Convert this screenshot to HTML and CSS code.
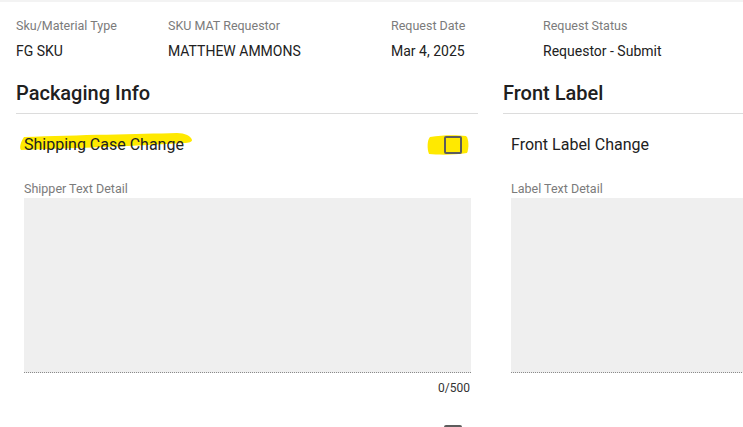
FILE: index.html
```html
<!DOCTYPE html>
<html>
<head>
<meta charset="utf-8">
<link rel="stylesheet" href="styles.css">
</head>
<body>
<div class="page">
  <div class="meta">
    <div class="meta-item"><div class="meta-label">Sku/Material Type</div><div class="meta-value">FG SKU</div></div>
    <div class="meta-item"><div class="meta-label">SKU MAT Requestor</div><div class="meta-value">MATTHEW AMMONS</div></div>
    <div class="meta-item"><div class="meta-label">Request Date</div><div class="meta-value">Mar 4, 2025</div></div>
    <div class="meta-item"><div class="meta-label">Request Status</div><div class="meta-value">Requestor - Submit</div></div>
  </div>
  <div class="sections">
    <section class="section">
      <h2 class="section-title">Packaging Info</h2>
      <div class="body">
        <div class="check-row">
          <span class="check-label hl-text">
            <svg class="hl" viewBox="0 0 174 20" preserveAspectRatio="none"><path d="M5 4 C60 2 120 1 158 0 C166 0 172 3 173 7 C173 9 170 10 165 10 C120 13 60 15 2 17 C0 15 2 8 5 4 Z" fill="#ffe900"/></svg>
            <span class="txt">Shipping Case Change</span>
          </span>
          <span class="check-wrap">
            <svg class="hl-box" viewBox="0 0 42 20" preserveAspectRatio="none"><path d="M3 2 C15 0 30 0 39 1 C42 3 42 14 40 18 C28 20 12 20 2 19 C0 14 0 5 3 2 Z" fill="#ffe900"/></svg>
            <span class="checkbox"></span>
          </span>
        </div>
        <div class="field-label">Shipper Text Detail</div>
        <div class="textarea"></div>
        <div class="counter">0/500</div>
        <div class="check-row next">
          <span class="check-label">&nbsp;</span>
          <span class="check-wrap"><span class="checkbox"></span></span>
        </div>
      </div>
    </section>
    <section class="section">
      <h2 class="section-title">Front Label</h2>
      <div class="body">
        <div class="check-row">
          <span class="check-label"><span class="txt">Front Label Change</span></span>
        </div>
        <div class="field-label">Label Text Detail</div>
        <div class="textarea"></div>
      </div>
    </section>
  </div>
</div>
</body>
</html>
```
FILE: styles.css
```css
html, body {
  margin: 0;
  padding: 0;
  background: #fff;
  overflow: hidden;
}
body {
  font-family: Roboto, "Liberation Sans", sans-serif;
  color: #212121;
  width: 743px;
  height: 427px;
}
.page {
  border-top: 2px solid #f3f3f3;
  padding-left: 16px;
}
.meta {
  display: grid;
  grid-template-columns: 152px 223px 152px 200px;
  padding-top: 16px;
}
.meta-label {
  font-size: 12.5px;
  line-height: 16px;
  color: #7b7b7b;
}
.meta-value {
  font-size: 14px;
  line-height: 20px;
  margin-top: 7px;
  color: #212121;
}
.sections {
  display: flex;
  gap: 25px;
  margin-top: 18px;
}
.section {
  flex: 0 0 462px;
  width: 462px;
}
.section-title {
  margin: 0;
  font-size: 20px;
  font-weight: 500;
  line-height: 28px;
  padding-bottom: 6px;
  border-bottom: 1px solid #dcdcdc;
  color: #202020;
}
.body {
  padding: 0 7px 0 8px;
}
.check-row {
  display: flex;
  align-items: center;
  justify-content: space-between;
  height: 34px;
  margin-top: 14px;
}
.check-row.next {
  margin-top: 21px;
}
.check-label {
  position: relative;
  font-size: 16px;
  line-height: 20px;
  color: #212121;
}
.check-label .txt {
  position: relative;
}
.hl {
  position: absolute;
  left: -5px;
  top: -2px;
  width: 174px;
  height: 20px;
}
.check-wrap {
  position: relative;
  width: 18px;
  height: 18px;
  margin-right: 9px;
}
.hl-box {
  position: absolute;
  left: -17px;
  top: -1px;
  width: 42px;
  height: 20px;
}
.checkbox {
  position: relative;
  display: block;
  box-sizing: border-box;
  width: 18px;
  height: 18px;
  border: 2px solid #5c5c5c;
  border-radius: 2px;
}
.field-label {
  margin-top: 19px;
  font-size: 12.5px;
  line-height: 16px;
  color: #7b7b7b;
}
.textarea {
  margin-top: 1px;
  height: 175px;
  box-sizing: border-box;
  background: #efefef;
  border-bottom: 1px dotted #8a8a8a;
}
.counter {
  margin-top: 7px;
  text-align: right;
  font-size: 12px;
  line-height: 16px;
  color: #333;
  padding-right: 1px;
}
```
